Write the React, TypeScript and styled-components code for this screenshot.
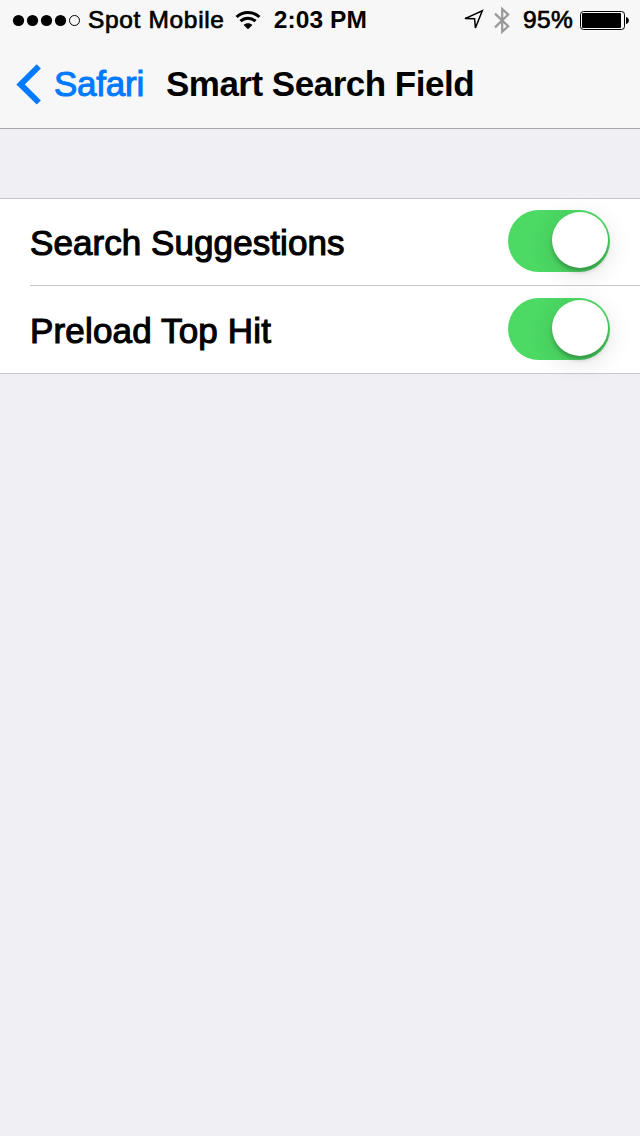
import React from 'react';
import styled, { createGlobalStyle } from 'styled-components';

const GlobalStyle = createGlobalStyle`
  html, body { margin: 0; padding: 0; background: #efeff4; }
  * { box-sizing: border-box; }
`;

const Screen = styled.main`
  width: 640px;
  height: 1136px;
  background: #efeff4;
  color: #000;
  font-family: "Liberation Sans", Arial, sans-serif;
  overflow: hidden;
`;

const TopBar = styled.header`
  height: 129px;
  background: #f7f7f7;
  border-bottom: 1px solid #a7a7aa;
`;

const StatusBar = styled.div`
  display: flex;
  justify-content: space-between;
  height: 40px;
  padding: 0 11px 0 12px;
`;

const StatusGroup = styled.div`
  display: flex;
  align-items: center;
  height: 40px;
`;

const Label = styled.span<{ $size: number; $spacing: number; $bold?: boolean; $ml?: number; $stroke?: number }>`
  font-size: ${(p) => p.$size}px;
  font-weight: ${(p) => (p.$bold ? 700 : 400)};
  letter-spacing: ${(p) => p.$spacing}px;
  margin: 0 0 0 ${(p) => p.$ml ?? 0}px;
  line-height: 40px;
  white-space: nowrap;
  -webkit-text-stroke: ${(p) => p.$stroke ?? 0}px currentColor;
`;

const Icon = styled.svg<{ $ml?: number }>`
  display: block;
  flex: none;
  margin-left: ${(p) => p.$ml ?? 0}px;
`;

const NavBar = styled.nav`
  display: flex;
  align-items: center;
  height: 88px;
  padding-left: 16px;
`;

const BackLink = styled.a`
  display: flex;
  align-items: center;
  color: #007aff;
`;

const Group = styled.section`
  margin-top: 69px;
  background: #fff;
  box-shadow: inset 0 1px #c8c7cc, inset 0 -1px #c8c7cc;
`;

const Row = styled.div`
  position: relative;
  display: flex;
  justify-content: space-between;
  height: 88px;
  padding: 12px 30px 0 30px;

  & + &::before {
    content: "";
    position: absolute;
    top: -1px;
    left: 30px;
    right: 0;
    height: 1px;
    background: #c8c7cc;
  }
`;

const RowLabel = styled.div`
  padding-top: 13px;
`;

const Switch = styled.div`
  display: flex;
  justify-content: flex-end;
  width: 102px;
  height: 62px;
  padding: 2px;
  border-radius: 31px;
  background: #4cd964;
`;

const Knob = styled.div`
  width: 56px;
  height: 56px;
  border-radius: 50%;
  background: #fff;
  box-shadow: 0 4px 5px -1px rgba(0, 0, 0, 0.28), 0 6px 26px rgba(0, 0, 0, 0.13);
`;

const SignalDots = () => (
  <Icon width="70" height="40" viewBox="0 0 70 40">
    {[6.5, 20.5, 34.5, 48.5].map((x) => (
      <circle key={x} cx={x} cy="20.5" r="5.6" />
    ))}
    <circle cx="62.5" cy="20.5" r="5" fill="none" stroke="#000" strokeWidth="1" />
  </Icon>
);

const Wifi = () => (
  <Icon width="26" height="40" viewBox="0 0 26 40" $ml={10}>
    <g fill="none" stroke="#000" strokeWidth="3">
      <path d="M1.6 17 C8 11 18 11 24.4 17" />
      <path d="M5.5 21.2 C9.7 17.2 16.3 17.2 20.5 21.2" />
    </g>
    <path d="M8.6 24.9 C11 22.6 15 22.6 17.4 24.9 L13 29.2 Z" />
  </Icon>
);

const LocationArrow = () => (
  <Icon width="21" height="40" viewBox="0 0 21 40">
    <path d="M2 18.6 L19.3 10.8 L12.4 28 L11.6 18.7 Z" fill="none" stroke="#000" strokeWidth="1.5" />
  </Icon>
);

const Bluetooth = () => (
  <Icon width="16" height="40" viewBox="0 0 16 40" $ml={10}>
    <path d="M1 13.6 L14.2 26.3 L8.2 31.8 V9 L14.2 14.6 L1 27.4" fill="none" stroke="#999" strokeWidth="2.2" />
  </Icon>
);

const Battery = () => (
  <Icon width="49" height="40" viewBox="0 0 49 40" $ml={7}>
    <rect x="0.5" y="11.5" width="44" height="18" rx="3" fill="none" stroke="#000" />
    <rect x="2" y="13" width="39" height="15" rx="1" />
    <path d="M46 17 C49.8 17.5 49.8 23.5 46 24 Z" />
  </Icon>
);

const ITEMS = [
  { text: 'Search Suggestions', spacing: 0.07 },
  { text: 'Preload Top Hit', spacing: 0.16 },
];

export default function App() {
  return (
    <>
      <GlobalStyle />
      <Screen>
        <TopBar>
          <StatusBar>
            <StatusGroup>
              <SignalDots />
              <Label $size={24.5} $spacing={0.66} $ml={6} $stroke={0.7}>Spot Mobile</Label>
              <Wifi />
              <Label $size={24.5} $spacing={0.12} $ml={13} $bold>2:03 PM</Label>
            </StatusGroup>
            <StatusGroup>
              <LocationArrow />
              <Bluetooth />
              <Label $size={24.5} $spacing={0.3} $ml={13.5} $stroke={0.7}>95%</Label>
              <Battery />
            </StatusGroup>
          </StatusBar>
          <NavBar>
            <BackLink>
              <Icon width="26" height="42" viewBox="0 0 26 42">
                <path d="M22.8 3.3 L4.6 21.4 L22.8 39.5" fill="none" stroke="#007aff" strokeWidth="5.9" />
              </Icon>
              <Label $size={35} $spacing={-0.25} $ml={12} $stroke={1}>Safari</Label>
            </BackLink>
            <Label as="h1" $size={35} $spacing={-0.5} $ml={22} $bold>Smart Search Field</Label>
          </NavBar>
        </TopBar>
        <Group>
          {ITEMS.map((item) => (
            <Row key={item.text}>
              <RowLabel>
                <Label $size={35} $spacing={item.spacing} $stroke={1.1}>{item.text}</Label>
              </RowLabel>
              <Switch role="switch" aria-checked="true" aria-label={item.text}>
                <Knob />
              </Switch>
            </Row>
          ))}
        </Group>
      </Screen>
    </>
  );
}
